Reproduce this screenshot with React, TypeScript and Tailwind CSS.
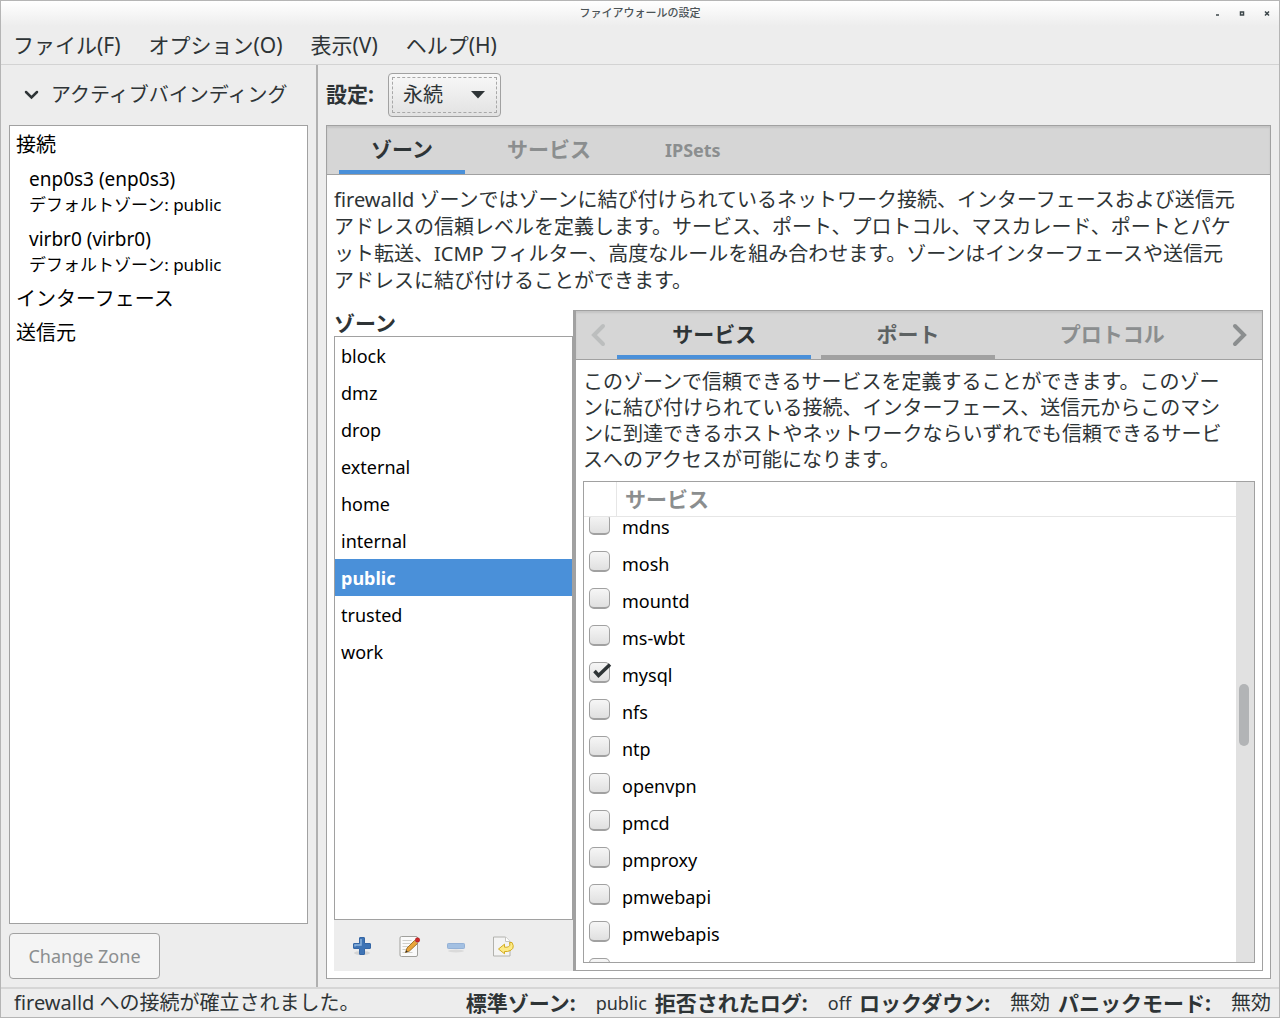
import { useEffect, useRef, useState } from "react";
import clsx from "clsx";

const menus = ["ファイル(F)", "オプション(O)", "表示(V)", "ヘルプ(H)"];

const bindings = [
  { name: "enp0s3 (enp0s3)", zone: "デフォルトゾーン: public" },
  { name: "virbr0 (virbr0)", zone: "デフォルトゾーン: public" },
];

const zones = ["block", "dmz", "drop", "external", "home", "internal", "public", "trusted", "work"];

const services = [
  "mdns", "mosh", "mountd", "ms-wbt", "mysql", "nfs",
  "ntp", "openvpn", "pmcd", "pmproxy", "pmwebapi", "pmwebapis",
];

const status = [
  { label: "標準ゾーン:", value: "public", latin: true },
  { label: "拒否されたログ:", value: "off", latin: true },
  { label: "ロックダウン:", value: "無効", latin: false },
  { label: "パニックモード:", value: "無効", latin: false },
];

function AddIcon() {
  return (
    <svg width="22" height="22" viewBox="0 0 22 22">
      <ellipse cx="11" cy="18" rx="8" ry="2" fill="#000" opacity="0.1" />
      <path d="M9 2.5h4q.5 0 .5.5v5.500h5.500q.5 0 .5.5v4q0 .5-.5.5H13.500V19q0 .5-.5.5H9q-.5 0-.5-.5v-5.500H3q-.5 0-.5-.5V9q0-.5.5-.5h5.500V3q0-.5.5-.5Z" fill="#3f74b5" stroke="#3566a5" />
      <path d="M10 4v6H4v1.500" fill="none" stroke="#8fb4dc" strokeWidth="1.500" />
    </svg>
  );
}

function EditIcon() {
  return (
    <svg width="24" height="24" viewBox="0 0 24 24">
      <rect x="3" y="2.500" width="17.500" height="20" rx="1.500" fill="#fafafa" stroke="#a0a09c" />
      <path d="M5.500 6.500h9M5.500 9.500h8M5.500 12.500h6M5.500 15.500h4M5.500 18.500h10" stroke="#cfcfcb" />
      <path d="m8.500 18.500 1.500-4.500L18 6l3 3-8.500 8Z" fill="#e9a53a" stroke="#8f5f15" strokeWidth=".8" />
      <path d="m8.500 18.500.8-2.300 1.500 1.500Z" fill="#2e2e2e" />
      <path d="m17.500 6.500 1-1 3 3-1 1Z" fill="#c4c8c2" />
      <circle cx="20.500" cy="6" r="2.200" fill="#d02828" stroke="#a41414" strokeWidth=".6" />
    </svg>
  );
}

function RemoveIcon() {
  return (
    <svg width="22" height="22" viewBox="0 0 22 22">
      <ellipse cx="11" cy="16" rx="8" ry="1.500" fill="#000" opacity="0.08" />
      <rect x="2.500" y="8.500" width="17" height="5" rx=".8" fill="#a3c0e2" stroke="#94b1d6" />
    </svg>
  );
}

function RevertIcon() {
  return (
    <svg width="24" height="24" viewBox="0 0 24 24">
      <path d="M2.500 3h12l4.500 4.500v14.500H2.500Z" fill="#f4f4f4" stroke="#b2b2ae" />
      <path d="M14.500 3v4.500H19" fill="#fff" stroke="#c4c4c0" />
      <path d="M18.500 8.500h2.500q4 7-4.500 9h-3v2.300L7.500 15l6-4.800v3H16q4-.7 2.500-4.700Z" fill="#fdea85" stroke="#d2ac22" strokeLinejoin="round" />
    </svg>
  );
}

const tools = [
  { label: "追加", icon: <AddIcon />, disabled: false },
  { label: "編集", icon: <EditIcon />, disabled: false },
  { label: "削除", icon: <RemoveIcon />, disabled: true },
  { label: "初期値に戻す", icon: <RevertIcon />, disabled: false },
];

function TitleBar() {
  return (
    <header className="grid h-[25px] shrink-0 grid-cols-[1fr_auto_1fr] items-center bg-linear-to-b from-white to-[#ededed]">
      <h1 className="col-start-2 text-[11px] font-medium text-[#4b5356]">ファイアウォールの設定</h1>
      <div className="flex justify-end text-[#3c464a]">
        <button aria-label="最小化" className="flex h-6 w-[25px] items-center justify-center">
          <svg width="6" height="6"><path d="M2 4h3" stroke="currentColor" strokeWidth="1.500" /></svg>
        </button>
        <button aria-label="最大化" className="flex h-6 w-[25px] items-center justify-center">
          <svg width="6" height="6"><path d="M1.500 1h3v3h-3Z" fill="none" stroke="currentColor" strokeWidth="1.500" /></svg>
        </button>
        <button aria-label="閉じる" className="flex h-6 w-[25px] items-center justify-center">
          <svg width="6" height="6"><path d="m1 .5 4 4M5 .5l-4 4" stroke="currentColor" strokeWidth="1.500" /></svg>
        </button>
      </div>
    </header>
  );
}

function Sidebar() {
  return (
    <aside className="flex w-[317px] shrink-0 flex-col border-r-2 border-[#b0b0b0] px-2 pb-2">
      <button className="flex h-[60px] shrink-0 items-center gap-3 pl-[15px] text-[20px]">
        <svg width="15" height="10" viewBox="0 0 15 10" fill="none">
          <path d="m2 2 5.500 5.500L13 2" stroke="#2e3436" strokeWidth="2.500" strokeLinecap="round" />
        </svg>
        アクティブバインディング
      </button>
      <ul className="min-h-0 flex-1 border border-[#a1a1a1] bg-white pt-0.5 text-[20px] text-black">
        <li>
          <div className="pl-1.5 leading-[34px]">接続</div>
          <ul>
            {bindings.map((b) => (
              <li key={b.name} className="py-[5px] pl-[19px]">
                <div className="text-[19px] leading-[25px]">{b.name}</div>
                <div className="text-[17px] leading-[25px]">{b.zone}</div>
              </li>
            ))}
          </ul>
        </li>
        <li className="pl-1.5 leading-[34px]">インターフェース</li>
        <li className="pl-1.5 leading-[34px]">送信元</li>
      </ul>
      <button disabled className="mt-[9px] h-[46px] w-[151px] shrink-0 rounded border border-[#a1a1a1] bg-[#f4f4f4] text-[18px] text-[#8b8e8f]">
        Change Zone
      </button>
    </aside>
  );
}

function ZoneList() {
  const [selected, setSelected] = useState("public");
  return (
    <section className="flex w-[239px] shrink-0 flex-col">
      <h2 className="text-[21px] leading-[26px] font-bold">ゾーン</h2>
      <ul className="min-h-0 flex-1 border border-[#a1a1a1] bg-white">
        {zones.map((zone) => (
          <li key={zone}>
            <button
              onClick={() => setSelected(zone)}
              className={clsx(
                "block h-[37px] w-full pt-0.5 pl-1.5 text-left text-[18px]",
                zone === selected ? "bg-[#4a90d9] font-bold text-white" : "text-black",
              )}
            >
              {zone}
            </button>
          </li>
        ))}
      </ul>
      <div className="flex h-[51px] shrink-0 items-center bg-[#ededed] pl-1">
        {tools.map((t) => (
          <button key={t.label} aria-label={t.label} disabled={t.disabled} className="flex w-[47px] justify-center">
            {t.icon}
          </button>
        ))}
      </div>
    </section>
  );
}

const checkboxClass =
  "peer block h-[21px] w-[21px] appearance-none rounded-[5px] border border-b-2 border-[#a1a1a1] bg-linear-to-b from-[#f6f6f6] to-[#e0e0e0]";

function ServiceTable() {
  const scroller = useRef<HTMLDivElement>(null);
  const [enabled, setEnabled] = useState(["mysql"]);

  useEffect(() => {
    if (scroller.current) scroller.current.scrollTop = 9;
  }, []);

  const toggle = (name: string) =>
    setEnabled((cur) => (cur.includes(name) ? cur.filter((n) => n !== name) : [...cur, name]));

  return (
    <div className="mt-2 flex min-h-0 flex-1 border border-[#a1a1a1] bg-white">
      <div ref={scroller} className="min-w-0 flex-1 overflow-y-auto [scrollbar-width:none]">
        <table className="w-full border-separate border-spacing-0">
          <thead className="sticky top-0 z-10 bg-white">
            <tr className="h-[35px]">
              <th className="w-[33px] border-r border-b border-[#e6e6e6]"></th>
              <th className="border-b border-[#e6e6e6] pl-2 text-left text-[21px] leading-[34px] font-bold text-[#8b8e8f]">サービス</th>
            </tr>
          </thead>
          <tbody>
            {services.map((name) => (
              <tr key={name} className="h-[37px]">
                <td className="p-0 pb-1 pl-[5px] align-middle">
                  <span className="relative block h-[21px] w-[21px]">
                    <input
                      id={`service-${name}`}
                      type="checkbox"
                      checked={enabled.includes(name)}
                      onChange={() => toggle(name)}
                      className={checkboxClass}
                    />
                    <svg className="pointer-events-none absolute top-0 left-1 hidden peer-checked:block" width="19" height="18" viewBox="0 0 19 18" fill="none">
                      <path d="m1.500 9 4 4.500L17 2.500" stroke="#2e3436" strokeWidth="3.500" />
                    </svg>
                  </span>
                </td>
                <td className="p-0 pl-[5px] text-[18px] leading-6 text-black">
                  <label htmlFor={`service-${name}`}>{name}</label>
                </td>
              </tr>
            ))}
            <tr className="h-[37px]">
              <td className="p-0 pb-1 pl-[5px] align-middle">
                <input type="checkbox" aria-label="サービス" className={checkboxClass} />
              </td>
              <td></td>
            </tr>
          </tbody>
        </table>
      </div>
      <div className="relative w-[18px] shrink-0 bg-[#e1e1e1]">
        <div className="absolute top-[42%] left-[3px] h-[62px] w-[10px] rounded-full bg-[#b2b4b6]" />
      </div>
    </div>
  );
}

function ZoneDetail() {
  return (
    <section className="flex min-w-0 flex-1 flex-col border border-l-[3px] border-[#a1a1a1] bg-white">
      <nav className="flex h-[49px] shrink-0 border-b border-[#a1a1a1] bg-[#d6d6d6] text-[21px] font-bold shadow-[inset_0_2px_2px_#c4c4c4]">
        <button aria-label="前へ" disabled className="flex w-[41px] items-center pl-[14px]">
          <svg width="16" height="24" viewBox="0 0 16 24" fill="none">
            <path d="m13 3-9 9 9 9" stroke="#bcbebe" strokeWidth="4" strokeLinecap="round" />
          </svg>
        </button>
        <div className="flex min-w-0 flex-1 gap-[10px]">
          <button className="flex-auto border-b-4 border-[#4a90d9] pt-1">サービス</button>
          <button className="flex-auto border-b-4 border-[#a1a1a1] pt-1 text-[#5d6263]">ポート</button>
          <button className="flex-auto border-b-4 border-transparent pt-1 text-[#8b8e8f]">プロトコル</button>
        </div>
        <button aria-label="次へ" className="flex w-[42px] items-center pl-3">
          <svg width="16" height="24" viewBox="0 0 16 24" fill="none">
            <path d="m3 3 9 9-9 9" stroke="#8b8e8f" strokeWidth="4" strokeLinecap="round" />
          </svg>
        </button>
      </nav>
      <div className="flex min-h-0 flex-1 flex-col px-[7px] pt-[9px] pb-[7px]">
        <p className="text-[20px] leading-[26px]">
          このゾーンで信頼できるサービスを定義することができます。このゾー
          <br />
          ンに結び付けられている接続、インターフェース、送信元からこのマシ
          <br />
          ンに到達できるホストやネットワークならいずれでも信頼できるサービ
          <br />
          スへのアクセスが可能になります。
        </p>
        <ServiceTable />
      </div>
    </section>
  );
}

function MainPanel() {
  return (
    <main className="flex min-w-0 flex-1 flex-col px-2 pb-2">
      <div className="flex h-[60px] shrink-0 items-center gap-[14px]">
        <label htmlFor="config" className="text-[21px] font-bold">設定:</label>
        <div className="relative">
          <select
            id="config"
            className="h-[44px] w-[113px] appearance-none rounded border border-[#a1a1a1] bg-linear-to-b from-[#f8f8f8] to-[#e2e2e2] pl-[14px] text-[20px] outline-1 -outline-offset-5 outline-[#a8a8a8] outline-dashed"
          >
            <option>永続</option>
          </select>
          <svg className="pointer-events-none absolute top-[18px] right-4" width="14" height="8" viewBox="0 0 14 8">
            <path d="M0 0h14L7 7.500Z" fill="#2e3436" />
          </svg>
        </div>
      </div>
      <div className="flex min-h-0 flex-1 flex-col border border-[#a1a1a1] bg-white">
        <nav className="flex h-[49px] shrink-0 gap-[10px] border-b border-[#a1a1a1] bg-[#d6d6d6] pl-3 text-[21px] font-bold text-[#8b8e8f] shadow-[inset_0_2px_2px_#c4c4c4]">
          <button className="border-b-4 border-[#4a90d9] px-8 pt-1 text-[#2e3436]">ゾーン</button>
          <button className="border-b-4 border-transparent px-8 pt-1">サービス</button>
          <button className="border-b-4 border-transparent px-8 pt-1 text-[18px]">IPSets</button>
        </nav>
        <div className="flex min-h-0 flex-1 flex-col px-[7px] pt-[11px] pb-[7px]">
          <p className="text-[20px] leading-[27px]">
            firewalld ゾーンではゾーンに結び付けられているネットワーク接続、インターフェースおよび送信元
            <br />
            アドレスの信頼レベルを定義します。サービス、ポート、プロトコル、マスカレード、ポートとパケ
            <br />
            ット転送、ICMP フィルター、高度なルールを組み合わせます。ゾーンはインターフェースや送信元
            <br />
            アドレスに結び付けることができます。
          </p>
          <div className="mt-4 flex min-h-0 flex-1">
            <ZoneList />
            <ZoneDetail />
          </div>
        </div>
      </div>
    </main>
  );
}

export default function App() {
  return (
    <div className="flex h-screen flex-col border border-[#b5b5b5] bg-[#ededed] font-['Noto_Sans','Noto_Sans_CJK_JP',sans-serif] text-[#2e3436]">
      <TitleBar />
      <nav className="flex h-[39px] shrink-0 items-center gap-7 border-b border-[#d3d3d3] pt-0.5 pl-3 text-[21px]">
        {menus.map((m) => (
          <button key={m}>{m}</button>
        ))}
      </nav>
      <div className="flex min-h-0 flex-1">
        <Sidebar />
        <MainPanel />
      </div>
      <footer className="flex h-[30px] shrink-0 items-center justify-between border-t-2 border-[#d6d6d6] pr-2 pl-[13px] text-[20px] leading-7 whitespace-nowrap">
        <span>firewalld への接続が確立されました。</span>
        <dl className="flex gap-2">
          {status.map((s) => (
            <div key={s.label} className="flex gap-5">
              <dt className="text-[21px] font-bold">{s.label}</dt>
              <dd className={clsx(s.latin && "text-[18px]")}>{s.value}</dd>
            </div>
          ))}
        </dl>
      </footer>
    </div>
  );
}
